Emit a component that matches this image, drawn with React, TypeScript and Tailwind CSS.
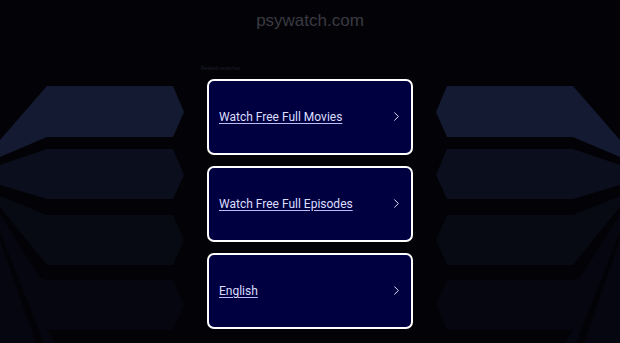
import { ChevronRight } from "lucide-react";

const links = ["Watch Free Full Movies", "Watch Free Full Episodes", "English"];

function Backdrop() {
  // decorative side shapes, right half is the mirror of the left half
  const shapes = (
    <>
      <polygon points="47,86 173,86 184,112 173,137 47,137 0,157 0,140" fill="#131a32" />
      <polygon points="0,165 47,149 173,149 184,175 173,199 47,199 0,185" fill="#0b0e1d" />
      <polygon points="0,196 47,215 173,215 184,240 173,265 47,265 0,207" fill="#070913" />
      <polygon points="0,214 40,278 47,280 173,280 184,305 173,330 47,330 55,343 44,343 0,232" fill="#05060f" />
      <polygon points="0,240 36,343 0,343" fill="#05060f" />
    </>
  );
  return (
    <svg
      className="absolute inset-0 h-full w-full"
      viewBox="0 0 620 343"
      preserveAspectRatio="none"
    >
      {shapes}
      <g transform="translate(620,0) scale(-1,1)">{shapes}</g>
    </svg>
  );
}

export default function App() {
  return (
    <div className="relative h-[343px] w-[620px] overflow-hidden bg-[#030307] font-['Liberation_Sans',Arial,sans-serif]">
      <Backdrop />

      <div className="relative flex flex-col items-center">
        {/* Domain */}
        <div className="flex h-[42px] items-center text-[17px] text-[#3a3a42]">psywatch.com</div>

        {/* Related searches */}
        <div className="w-[218px]">
          <div className="pt-[23px] text-[5px] leading-[6px] text-[#1c1d2b]">Related searches</div>

          <div className="mt-[8px] flex flex-col gap-[11.5px] px-[6px]">
            {links.map((label) => (
              <a
                key={label}
                href="#"
                className="flex h-[75.5px] items-center justify-between rounded-[7px] border-2 border-white bg-[#000040] pl-[10px] pr-[7px] font-['Roboto',sans-serif] text-[12px] text-[#dcdfff]"
              >
                <span className="underline decoration-[#b9bdf5] underline-offset-2">{label}</span>
                <ChevronRight className="h-[15px] w-[15px] text-[#eceeff]" strokeWidth={1.5} />
              </a>
            ))}
          </div>
        </div>
      </div>
    </div>
  );
}
